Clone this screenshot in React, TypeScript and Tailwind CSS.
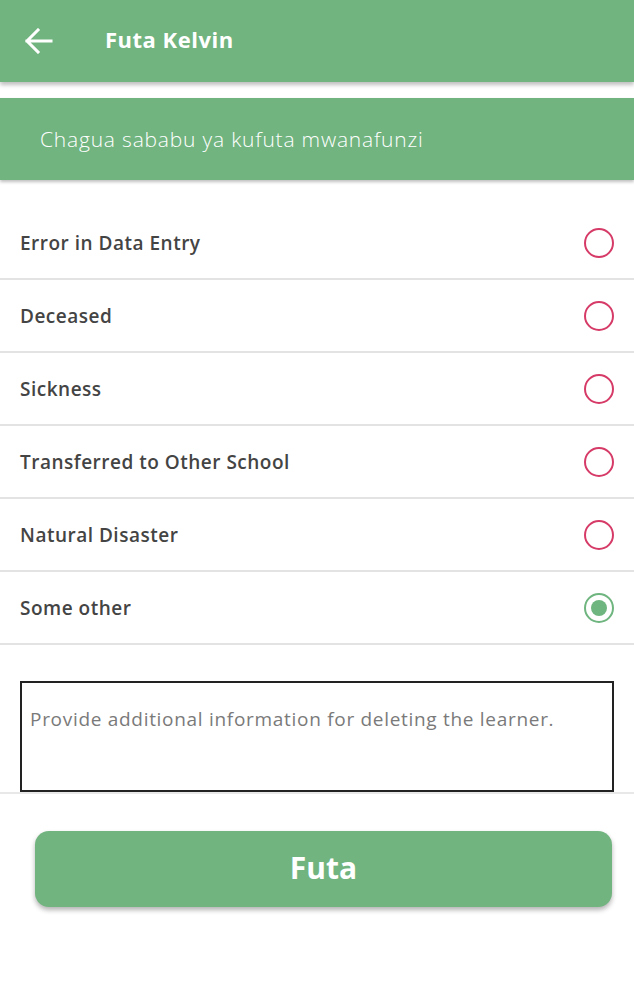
import React from "react";

const reasons = [
  "Error in Data Entry",
  "Deceased",
  "Sickness",
  "Transferred to Other School",
  "Natural Disaster",
  "Some other",
];

export default function App() {
  const selected = 5;
  return (
    <div
      className="w-[634px] h-[982px] bg-white flex flex-col overflow-hidden"
      style={{ fontFamily: "'Open Sans', Lato, sans-serif" }}
    >
      <header className="h-[82px] bg-[#71b47f] flex items-center shadow-[0_3px_4px_rgba(0,0,0,0.25)] relative z-10 shrink-0">
        <svg className="ml-[24px]" width="29" height="26" viewBox="0 0 29 26" fill="none">
          <path d="M27 13H3M14 2L3 13l11 11" stroke="white" strokeWidth="3" strokeLinecap="square" />
        </svg>
        <h1 className="ml-[52px] mb-[4px] text-white font-bold text-[22px] tracking-[0.5px]">Futa Kelvin</h1>
      </header>
      <div className="h-[16px] shrink-0" />
      <div className="h-[82px] bg-[#71b47f] flex items-center pl-[40px] shadow-[0_2px_3px_rgba(0,0,0,0.25)] relative z-10 shrink-0">
        <span className="text-white text-[21px] font-light tracking-[0.8px] pt-[2px]">
          Chagua sababu ya kufuta mwanafunzi
        </span>
      </div>
      <div className="pt-[27px] flex flex-col">
        {reasons.map((r, i) => (
          <div
            key={r}
            className="h-[73px] flex items-center justify-between pl-[20px] pr-[20px] border-b-2 border-[#e3e3e3]"
          >
            <span className="text-[19px] font-semibold text-[#444444] tracking-[0.5px] pt-[2px]">{r}</span>
            {i === selected ? (
              <span className="w-[30px] h-[30px] rounded-full border-[2.5px] border-[#6fb57f] flex items-center justify-center">
                <span className="w-[16px] h-[16px] rounded-full bg-[#6fb57f]" />
              </span>
            ) : (
              <span className="w-[30px] h-[30px] rounded-full border-[2.5px] border-[#d63b68]" />
            )}
          </div>
        ))}
      </div>
      <div className="pt-[36px] border-b-2 border-[#e8e8e8] px-[20px]">
        <div className="h-[111px] border-2 border-[#222] px-[8px] pt-[22px]">
          <span className="text-[19px] text-[#7a7a7a] tracking-[0.7px]">
            Provide additional information for deleting the learner.
          </span>
        </div>
      </div>
      <div className="pt-[37px] pl-[35px] pr-[22px]">
        <button className="w-full h-[76px] rounded-[14px] bg-[#71b47f] text-white font-bold text-[30px] pb-[4px] shadow-[0_3px_5px_rgba(0,0,0,0.3)]">
          Futa
        </button>
      </div>
    </div>
  );
}
